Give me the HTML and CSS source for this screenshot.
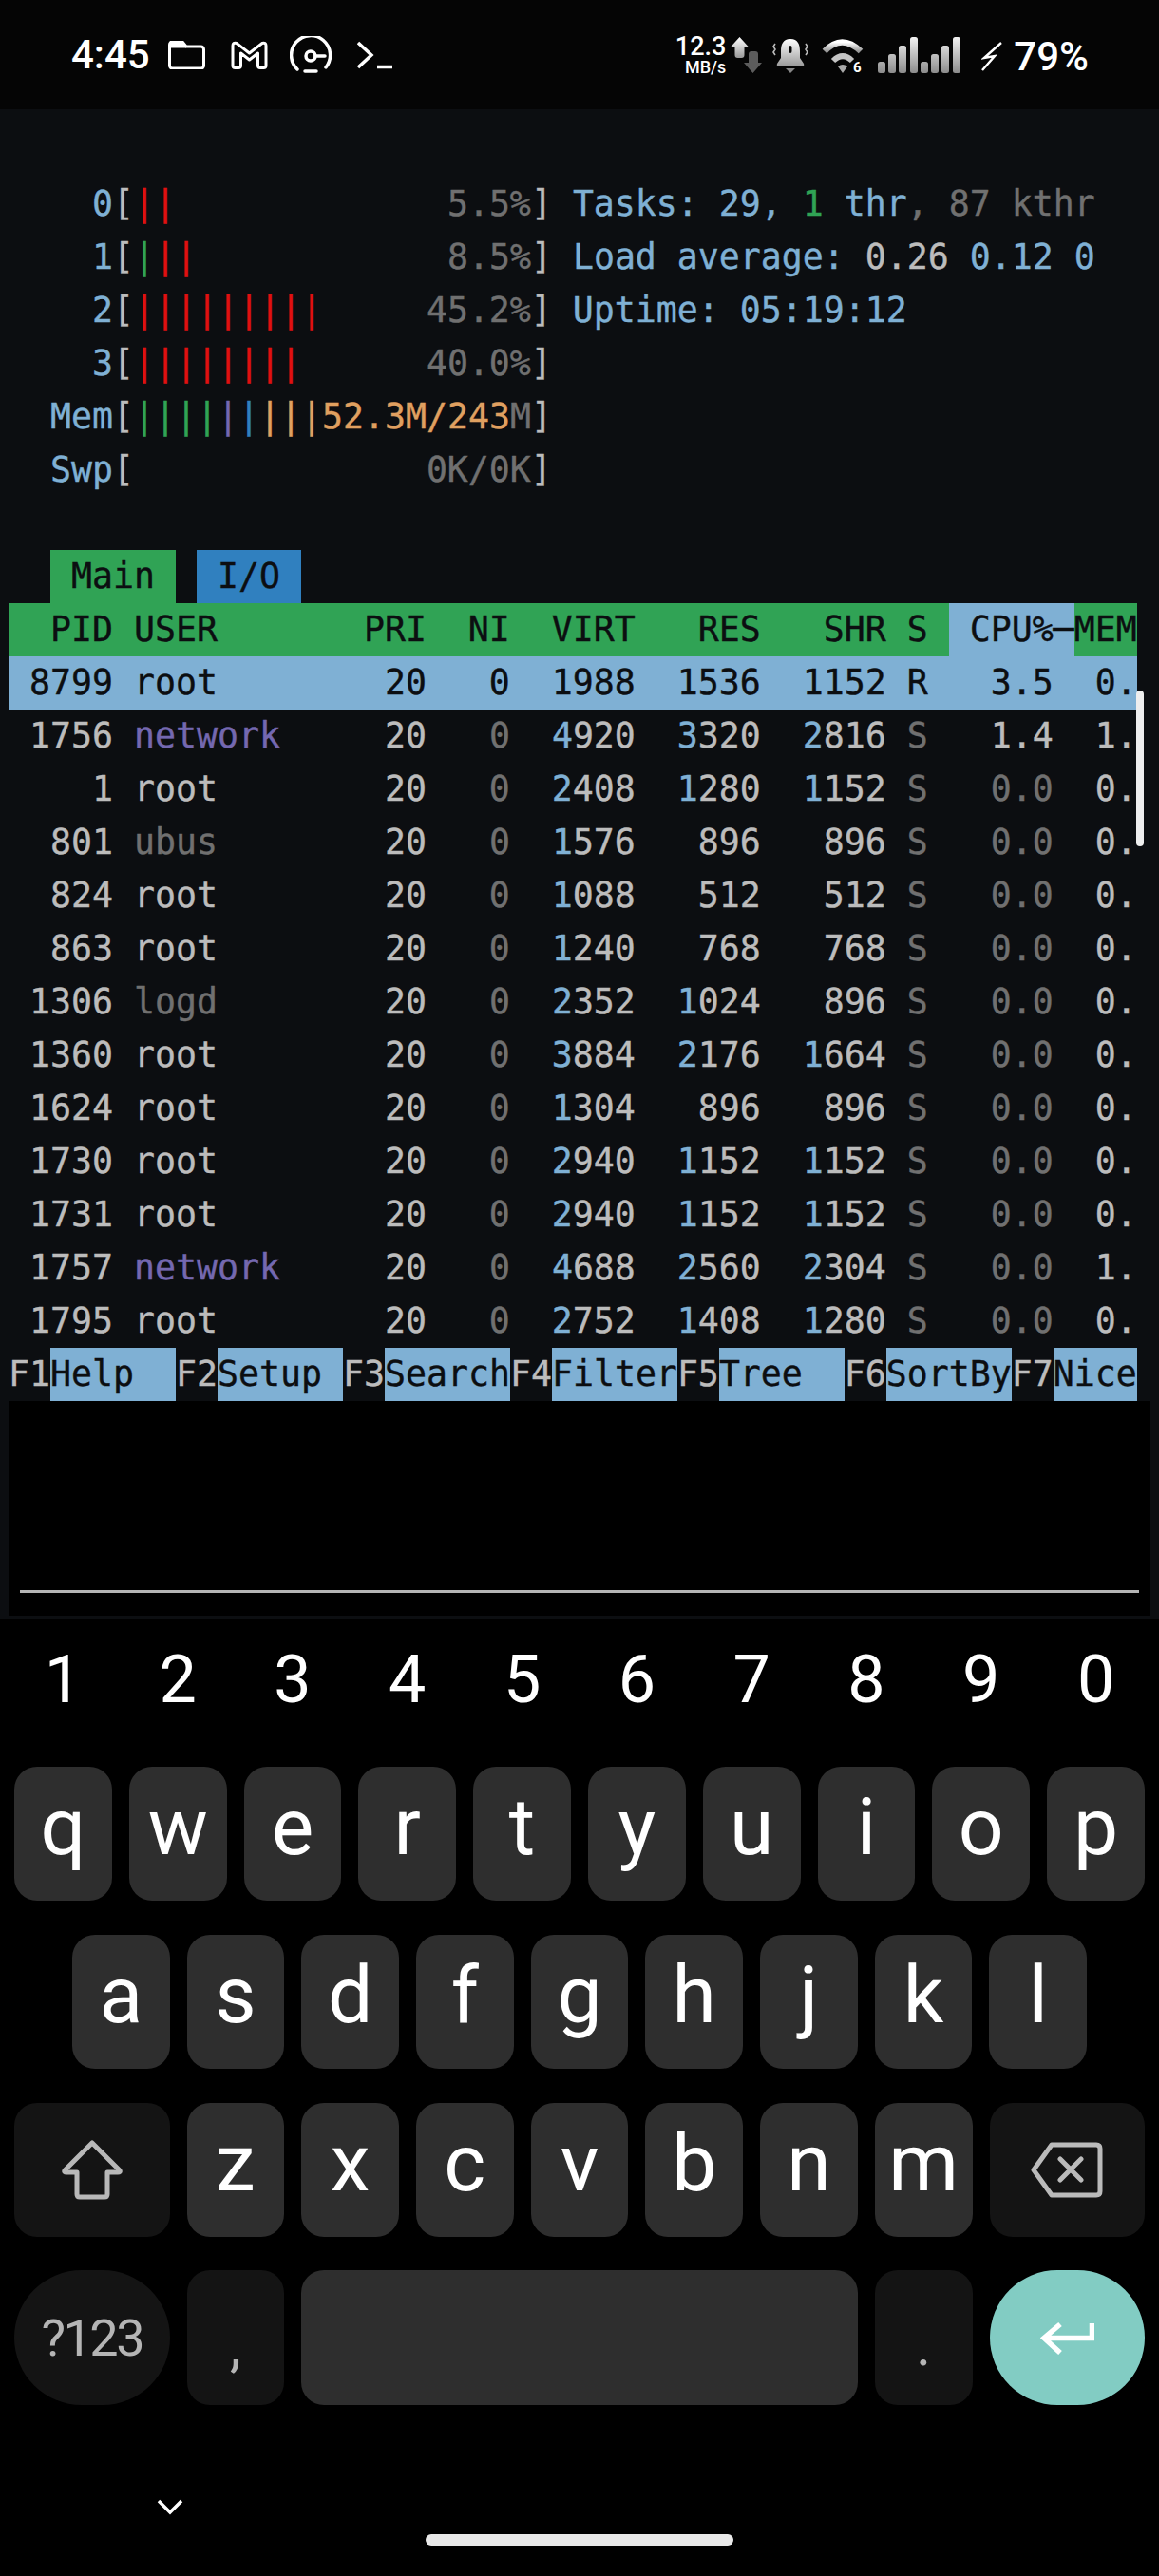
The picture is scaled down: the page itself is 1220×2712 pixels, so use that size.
FILE: index.html
```html
<!DOCTYPE html>
<html lang="en">
<head>
    <meta charset="UTF-8">
    <meta name="viewport" content="width=device-width, initial-scale=1.0">
    <title>htop in Termux</title>
    <link rel="stylesheet" href="styles.css">
</head>
<body>
    <div class="status-bar">
        <span class="clock">4:45</span>
        <svg class="ic-folder" width="39" height="30" viewBox="0 0 39 30"><path d="M1.5 4a3 3 0 0 1 3-3H15l4 5h15.500a3 3 0 0 1 3 3v17a3 3 0 0 1-3 3h-30a3 3 0 0 1-3-3z" fill="none" stroke="#fff" stroke-width="3"/><path d="M2 2h13l4 5.500H2z" fill="#fff"/></svg>
        <svg class="ic-mail" width="41" height="30" viewBox="0 0 41 30"><path d="M3 5Q3 1.500 7 2.500L20.500 13 34 2.500Q38 1.500 38 5V26Q38 28.500 35.500 28.500H32Q29.500 28.500 29.500 26V13L20.500 20 11.500 13V26Q11.500 28.500 9 28.500H5.500Q3 28.500 3 26Z" fill="none" stroke="#fff" stroke-width="3" stroke-linejoin="round"/></svg>
        <svg class="ic-gauge" width="45" height="39" viewBox="0 0 45 39"><path d="M8 35A20.500 20.500 0 1 1 38 33" fill="none" stroke="#fff" stroke-width="3.500" stroke-linecap="round"/><circle cx="22" cy="21" r="5" fill="none" stroke="#fff" stroke-width="3.500"/><path d="M27 21H37" stroke="#fff" stroke-width="3.500" stroke-linecap="round"/><path d="M16 37H28" stroke="#fff" stroke-width="3.500" stroke-linecap="round"/></svg>
        <svg class="ic-prompt" width="37" height="30" viewBox="0 0 37 30"><path d="M1 2L15 15 1 28" fill="none" stroke="#fff" stroke-width="3.500"/><path d="M21 27.500H37" stroke="#fff" stroke-width="3.500"/></svg>

        <div class="status-right">
            <div class="net"><span class="net-val">12.3</span><span class="net-unit">MB/s</span></div>
            <svg class="ic-arrows" width="33" height="38" viewBox="0 0 33 38">
                <defs>
                    <linearGradient id="fade" x1="0" y1="0" x2="0" y2="1"><stop offset="0" stop-color="#fff"/><stop offset="1" stop-color="#999"/></linearGradient>
                </defs>
                <path d="M9.500 0L19 10.500H14.500V19a3 3 0 0 1-3 3h-4a3 3 0 0 1-3-3V10.500H0z" fill="url(#fade)"/>
                <path d="M19 18a3 3 0 0 1 3-3h4a3 3 0 0 1 3 3v9h4l-9.500 11L14 27h5z" fill="#5c5c5c"/>
            </svg>
            <svg class="ic-bell" width="38" height="38" viewBox="0 0 38 38">
                <path d="M19 2C11 2 9 8 9 15V22L5 28Q4 31 7 31H31Q34 31 33 28L29 22V15C29 8 27 2 19 2ZM19 9Q20.500 9 20.500 11V15Q20.500 17 19 17T17.500 15V11Q17.500 9 19 9Z" fill="url(#fade)" fill-rule="evenodd"/>
                <path d="M14 33H24L19 38z" fill="#888"/>
                <path d="M3 7L1 10 3 13 1 16 3 19M35 7L37 10 35 13 37 16 35 19" fill="none" stroke="#bbb" stroke-width="1.600"/>
            </svg>
            <svg class="ic-wifi" width="45" height="38" viewBox="0 0 45 38">
                <path d="M3 15Q21 -4 41 15" fill="none" stroke="url(#fade)" stroke-width="6.500"/>
                <path d="M12 25Q22 15 32 25" fill="none" stroke="#c4c4c4" stroke-width="6"/>
                <path d="M22 38L17 31Q22 27 27 31z" fill="#aaa"/>
                <text class="wifi-gen" x="33" y="37">6</text>
            </svg>
            <svg class="ic-bars" width="87" height="38" viewBox="0 0 87 38">
                <g fill="url(#barfade)">
                    <rect x="0" y="26" width="8" height="12" rx="2.500"/>
                    <rect x="11" y="18" width="8" height="20" rx="2.500"/>
                    <rect x="22" y="9" width="8" height="29" rx="2.500"/>
                    <rect x="34" y="0" width="8" height="38" rx="2.500"/>
                    <rect x="45" y="26" width="8" height="12" rx="2.500"/>
                    <rect x="56" y="18" width="8" height="20" rx="2.500"/>
                    <rect x="67" y="9" width="8" height="29" rx="2.500"/>
                    <rect x="79" y="0" width="8" height="38" rx="2.500"/>
                </g>
                <defs>
                    <linearGradient id="barfade" gradientUnits="userSpaceOnUse" x1="0" y1="0" x2="0" y2="38"><stop offset="0" stop-color="#f2f2f2"/><stop offset="1" stop-color="#8c8c8c"/></linearGradient>
                </defs>
            </svg>
            <svg class="ic-bolt" width="22" height="31" viewBox="0 0 22 31"><path d="M21 1L3 17 14 15 1 30" fill="none" stroke="#fff" stroke-width="2.400"/></svg>
            <span class="battery">79%</span>
        </div>
    </div>

    <div class="terminal">
        <div class="screen">
            <div class="row"></div>
            <div class="row"><span class="b">    0</span>[<span class="r">||</span>             <span class="d">5.5%</span>] <span class="b">Tasks: 29, </span><span class="g">1</span><span class="b"> thr</span><span class="d">, 87 kthr</span></div>
            <div class="row"><span class="b">    1</span>[<span class="g">|</span><span class="r">||</span>            <span class="d">8.5%</span>] <span class="b">Load average: </span>0.26 <span class="b">0.12 0</span></div>
            <div class="row"><span class="b">    2</span>[<span class="r">|||||||||</span>     <span class="d">45.2%</span>] <span class="b">Uptime: 05:19:12</span></div>
            <div class="row"><span class="b">    3</span>[<span class="r">||||||||</span>      <span class="d">40.0%</span>]</div>
            <div class="row"><span class="b">  Mem</span>[<span class="g">||||</span><span class="p">|</span><span class="k">|</span><span class="o">|||52.3M/243</span><span class="d">M</span>]</div>
            <div class="row"><span class="b">  Swp</span>[              <span class="d">0K/0K</span>]</div>
            <div class="row"></div>
            <div class="row tabs">  <span class="tab tab-main"> Main </span> <span class="tab tab-io"> I/O </span></div>
            <div class="row head">  PID USER       PRI  NI  VIRT   RES   SHR S <span class="head-sort"> CPU%─</span>MEM</div>
            <div class="row selected"> 8799 root        20   0  1988  1536  1152 R   3.5  0.</div>
            <div class="row"> 1756 <span class="p">network</span>     20   <span class="d">0</span>  <span class="b">4</span>920  <span class="b">3</span>320  <span class="b">2</span>816 <span class="d">S</span>   1.4  1.</div>
            <div class="row">    1 root        20   <span class="d">0</span>  <span class="b">2</span>408  <span class="b">1</span>280  <span class="b">1</span>152 <span class="d">S</span>   <span class="d">0.0</span>  0.</div>
            <div class="row">  801 <span class="d">ubus</span>        20   <span class="d">0</span>  <span class="b">1</span>576   896   896 <span class="d">S</span>   <span class="d">0.0</span>  0.</div>
            <div class="row">  824 root        20   <span class="d">0</span>  <span class="b">1</span>088   512   512 <span class="d">S</span>   <span class="d">0.0</span>  0.</div>
            <div class="row">  863 root        20   <span class="d">0</span>  <span class="b">1</span>240   768   768 <span class="d">S</span>   <span class="d">0.0</span>  0.</div>
            <div class="row"> 1306 <span class="d">logd</span>        20   <span class="d">0</span>  <span class="b">2</span>352  <span class="b">1</span>024   896 <span class="d">S</span>   <span class="d">0.0</span>  0.</div>
            <div class="row"> 1360 root        20   <span class="d">0</span>  <span class="b">3</span>884  <span class="b">2</span>176  <span class="b">1</span>664 <span class="d">S</span>   <span class="d">0.0</span>  0.</div>
            <div class="row"> 1624 root        20   <span class="d">0</span>  <span class="b">1</span>304   896   896 <span class="d">S</span>   <span class="d">0.0</span>  0.</div>
            <div class="row"> 1730 root        20   <span class="d">0</span>  <span class="b">2</span>940  <span class="b">1</span>152  <span class="b">1</span>152 <span class="d">S</span>   <span class="d">0.0</span>  0.</div>
            <div class="row"> 1731 root        20   <span class="d">0</span>  <span class="b">2</span>940  <span class="b">1</span>152  <span class="b">1</span>152 <span class="d">S</span>   <span class="d">0.0</span>  0.</div>
            <div class="row"> 1757 <span class="p">network</span>     20   <span class="d">0</span>  <span class="b">4</span>688  <span class="b">2</span>560  <span class="b">2</span>304 <span class="d">S</span>   <span class="d">0.0</span>  1.</div>
            <div class="row"> 1795 root        20   <span class="d">0</span>  <span class="b">2</span>752  <span class="b">1</span>408  <span class="b">1</span>280 <span class="d">S</span>   <span class="d">0.0</span>  0.</div>
            <div class="row">F1<span class="fkey">Help  </span>F2<span class="fkey">Setup </span>F3<span class="fkey">Search</span>F4<span class="fkey">Filter</span>F5<span class="fkey">Tree  </span>F6<span class="fkey">SortBy</span>F7<span class="fkey">Nice</span></div>
        </div>
        <div class="input-box">
            <div class="input-line"></div>
        </div>
        <div class="scroll-thumb"></div>
    </div>

    <div class="keyboard">
        <div class="digits">
            <span>1</span><span>2</span><span>3</span><span>4</span><span>5</span><span>6</span><span>7</span><span>8</span><span>9</span><span>0</span>
        </div>
        <div class="key-row">
            <div class="key">q</div><div class="key">w</div><div class="key">e</div><div class="key">r</div><div class="key">t</div><div class="key">y</div><div class="key">u</div><div class="key">i</div><div class="key">o</div><div class="key">p</div>
        </div>
        <div class="key-row row-home">
            <div class="key">a</div><div class="key">s</div><div class="key">d</div><div class="key">f</div><div class="key">g</div><div class="key">h</div><div class="key">j</div><div class="key">k</div><div class="key">l</div>
        </div>
        <div class="key-row">
            <div class="key key-fn key-wide">
                <svg width="66" height="64" viewBox="0 0 66 64"><path d="M33 4L62 33Q63 35 60 35H49V58Q49 61 46 61H20Q17 61 17 58V35H6Q3 35 4 33Z" fill="none" stroke="#b8b8b8" stroke-width="5" stroke-linejoin="round"/></svg>
            </div>
            <div class="key">z</div><div class="key">x</div><div class="key">c</div><div class="key">v</div><div class="key">b</div><div class="key">n</div><div class="key">m</div>
            <div class="key key-fn key-wide">
                <svg width="76" height="59" viewBox="0 0 76 59"><path d="M22 3H69Q73 3 73 7V52Q73 56 69 56H22L3 29.500Z" fill="none" stroke="#bbb" stroke-width="5" stroke-linejoin="round"/><path d="M31 18L53 40M53 18L31 40" stroke="#bbb" stroke-width="5" stroke-linecap="round"/></svg>
            </div>
        </div>
        <div class="key-row">
            <div class="key key-fn key-wide key-round key-sym">?123</div>
            <div class="key key-fn key-punct">,</div>
            <div class="key key-space"></div>
            <div class="key key-fn key-punct">.</div>
            <div class="key key-wide key-round key-enter">
                <svg width="57" height="35" viewBox="0 0 57 35"><path d="M54.500 2V17.500H5M21 3L4 17.500 21 33" fill="none" stroke="#fff" stroke-width="5.500"/></svg>
            </div>
        </div>
        <div class="nav-area">
            <svg class="nav-chevron" width="28" height="17" viewBox="0 0 28 17"><path d="M2 2L14 14 26 2" fill="none" stroke="#fff" stroke-width="3.500"/></svg>
            <div class="home-pill"></div>
        </div>
    </div>
</body>
</html>
```

FILE: styles.css
```css
* {
    box-sizing: border-box;
}

body {
    margin: 0;
    width: 1220px;
    height: 2712px;
    overflow: hidden;
    background-color: #000;
    color: #fff;
    font-family: 'Roboto', sans-serif;
}

/* status bar */
.status-bar {
    display: flex;
    align-items: center;
    height: 115px;
    padding-left: 75px;
    background-color: #050505;
}

.clock {
    font-size: 42px;
    font-weight: 500;
}

.ic-folder { margin-left: 19px; }
.ic-mail { margin-left: 26px; }
.ic-gauge { margin-left: 22px; }
.ic-prompt { margin-left: 26px; }

.status-right {
    display: flex;
    align-items: center;
    margin-left: auto;
    padding-right: 74px;
}

.net {
    display: flex;
    flex-direction: column;
    align-items: flex-end;
    width: 53px;
    font-weight: 500;
}

.net-val {
    font-size: 27px;
    line-height: 26px;
}

.net-unit {
    font-size: 18px;
    line-height: 18px;
}

.ic-arrows { margin-left: 5px; }
.ic-bell { margin-left: 11px; }
.ic-wifi { margin-left: 14px; }
.ic-bars { margin-left: 14px; }
.ic-bolt { margin-left: 22px; margin-top: 4px; }

.wifi-gen {
    font-family: 'Roboto', sans-serif;
    font-size: 15px;
    font-weight: 700;
    fill: #fff;
}

.battery {
    margin-left: 12px;
    margin-top: 4px;
    font-size: 42px;
    font-weight: 500;
}

/* terminal */
.terminal {
    position: relative;
    height: 1589px;
    padding-top: 16px;
    background-color: #0c0e11;
}

.screen {
    padding-left: 9px;
    font-family: 'DejaVu Sans Mono', monospace;
    font-size: 36.54px;
    color: #bcbcbc;
    -webkit-text-stroke: 0.4px;
}

.row {
    height: 56px;
    line-height: 56px;
    white-space: pre;
}

.b { color: #7fb0d4; }
.d { color: #707070; }
.r { color: #e01010; }
.g { color: #30a355; }
.p { color: #7468b0; }
.k { color: #3080bf; }
.o { color: #e0a060; }

.tab, .head-sort, .fkey {
    display: inline-block;
    height: 56px;
    color: #0c0e11;
}

.tab-main { background-color: #30a355; }
.tab-io { background-color: #3080bf; }

.head {
    width: 1188px;
    background-color: #30a355;
    color: #0c0e11;
}

.head-sort { background-color: #7fb0d4; }

.selected {
    width: 1188px;
    background-color: #7fb0d4;
    color: #0c0e11;
}

.fkey { background-color: #7fb0d4; }

.input-box {
    height: 226px;
    margin: 0 9px;
    padding: 199px 12px 0;
    background-color: #000;
}

.input-line {
    height: 3px;
    background-color: #b5b5b5;
}

.scroll-thumb {
    position: absolute;
    left: 1196px;
    top: 612px;
    width: 8px;
    height: 164px;
    border-radius: 4px;
    background-color: #eee;
}

/* keyboard */
.keyboard {
    height: 1008px;
    background-color: #000;
}

.digits {
    display: flex;
    gap: 18px;
    height: 128px;
    margin-bottom: 28px;
    padding: 0 15px;
    font-size: 70px;
    font-weight: 400;
    line-height: 128px;
    text-align: center;
}

.digits span {
    flex: 1;
}

.key-row {
    display: flex;
    gap: 18px;
    height: 141.3px;
    margin-bottom: 35.5px;
    padding: 0 15px;
}

.row-home {
    padding: 0 76px;
}

.key {
    display: flex;
    flex: 1;
    align-items: center;
    justify-content: center;
    padding-bottom: 14px;
    border-radius: 24px;
    background-color: #2e2e2e;
    font-size: 84px;
    font-weight: 400;
}

.key-fn {
    padding-bottom: 0;
    background-color: #141414;
    color: #b5b5b5;
}

.key-wide {
    flex: 0 0 163.500px;
}

.key-round {
    padding-bottom: 0;
    border-radius: 71px;
}

.key-sym {
    font-size: 54px;
    font-weight: 400;
    letter-spacing: -2.5px;
}

.key-punct {
    flex: 0 0 102.800px;
    padding-top: 16px;
    font-size: 60px;
    font-weight: 400;
}

.key-space {
    flex: 1;
}

.key-enter {
    background-color: #82ccc3;
}

.nav-area {
    padding-top: 64px;
}

.nav-chevron {
    display: block;
    margin-left: 165px;
}

.home-pill {
    width: 324px;
    height: 12px;
    margin: 20px auto 0;
    border-radius: 6px;
    background-color: #e8e8e8;
}
```
